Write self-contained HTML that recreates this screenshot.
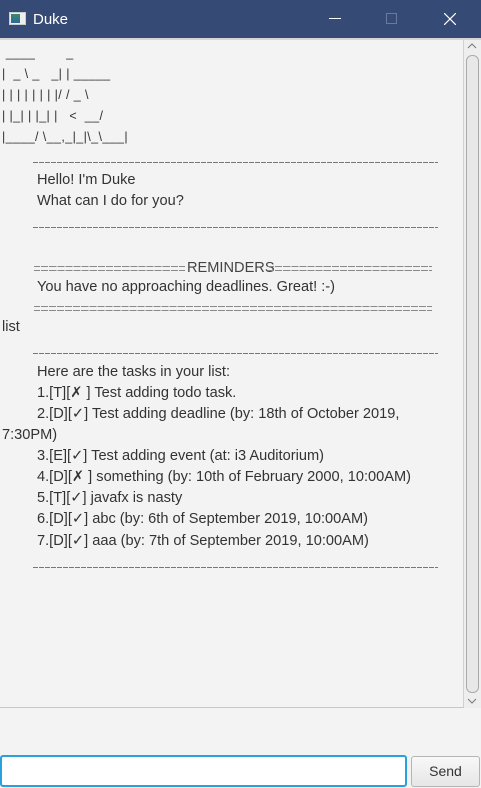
<!DOCTYPE html>
<html><head><meta charset="utf-8"><style>
*{margin:0;padding:0;box-sizing:border-box}
body{width:481px;height:788px;background:#f3f3f3;position:relative;overflow:hidden;font-family:"Liberation Sans","DejaVu Sans",sans-serif;color:#333;font-size:14.6px}
.tb{position:absolute;left:0;top:0;width:481px;height:38px;background:#354a75;color:#fff}
.t{position:absolute;white-space:pre;line-height:18px}
.dash{position:absolute;left:33px;width:405px;height:1px;background:repeating-linear-gradient(90deg,#777 0 5px,transparent 5px 6px)}
.eq{position:absolute;height:5px;border-top:1px solid #888;border-bottom:1px solid #888;border-image:repeating-linear-gradient(90deg,#888 0 7px,transparent 7px 8px) 1}
</style></head><body>
<div class="tb">
 <div style="position:absolute;left:9px;top:12px;width:17px;height:13px;background:#eee;border:1px solid #ccc"><div style="position:absolute;left:1px;top:1px;width:9px;height:9px;background:linear-gradient(#3a8a6a,#2d6a9a)"></div></div>
 <div class="t" style="left:33px;top:11px;font-size:15px;color:#fff">Duke</div>
 <div style="position:absolute;left:329px;top:18px;width:12px;height:1px;background:#fff"></div>
 <div style="position:absolute;left:386px;top:13px;width:11px;height:11px;border:1px solid #6a7a9a"></div>
 <svg style="position:absolute;left:444px;top:13px" width="12" height="12"><path d="M0 0L12 12M12 0L0 12" stroke="#fff" stroke-width="1.2"/></svg>
</div>
<div style="position:absolute;left:0;top:38px;width:481px;height:2px;background:#d6d6d6"></div>
<div style="position:absolute;left:463px;top:40px;width:18px;height:668px;background:#eeeeee;border-left:1px solid #d0d0d0"></div>
<svg style="position:absolute;left:467px;top:42px" width="10" height="8"><path d="M1 6L5 2L9 6" stroke="#777" fill="none"/></svg>
<div style="position:absolute;left:466px;top:55px;width:13px;height:638px;background:#e8e8e8;border:1px solid #aaa;border-radius:6px"></div>
<svg style="position:absolute;left:467px;top:697px" width="10" height="8"><path d="M1 2L5 6L9 2" stroke="#777" fill="none"/></svg>
<div style="position:absolute;left:0;top:707px;width:464px;height:1px;background:#c8c8c8"></div>

<div class="t" style="left:2px;top:43px;font-size:12.5px;line-height:21px;letter-spacing:0.4px"> ____        _
|  _ \ _   _| | _____
| | | | | | | |/ / _ \
| |_| | |_| |   <  __/
|____/ \__,_|_|\_\___|</div>

<div class="dash" style="top:162px"></div>
<div class="t" style="left:37px;top:171px">Hello! I'm Duke</div>
<div class="t" style="left:37px;top:192px">What can I do for you?</div>
<div class="dash" style="top:227px"></div>
<div class="eq" style="left:34px;top:266px;width:151px"></div>
<div class="t" style="left:187px;top:259px;color:#444">REMINDERS</div>
<div class="eq" style="left:268px;top:266px;width:164px"></div>
<div class="t" style="left:37px;top:278px">You have no approaching deadlines. Great! :-)</div>
<div class="eq" style="left:34px;top:306px;width:398px"></div>
<div class="t" style="left:2px;top:318px">list</div>
<div class="dash" style="top:353px"></div>
<div class="t" style="left:37px;top:363px">Here are the tasks in your list:</div>
<div class="t" style="left:37px;top:384px">1.[T][✗ ] Test adding todo task.</div>
<div class="t" style="left:37px;top:405px">2.[D][✓] Test adding deadline (by: 18th of October 2019,</div>
<div class="t" style="left:2px;top:426px">7:30PM)</div>
<div class="t" style="left:37px;top:447px">3.[E][✓] Test adding event (at: i3 Auditorium)</div>
<div class="t" style="left:37px;top:468px">4.[D][✗ ] something (by: 10th of February 2000, 10:00AM)</div>
<div class="t" style="left:37px;top:489px">5.[T][✓] javafx is nasty</div>
<div class="t" style="left:37px;top:510px">6.[D][✓] abc (by: 6th of September 2019, 10:00AM)</div>
<div class="t" style="left:37px;top:532px">7.[D][✓] aaa (by: 7th of September 2019, 10:00AM)</div>
<div class="dash" style="top:567px"></div>

<div style="position:absolute;left:0;top:755px;width:407px;height:32px;background:#fff;border:2px solid #2aa0de;border-radius:3px"></div>
<div style="position:absolute;left:411px;top:756px;width:69px;height:31px;background:linear-gradient(#f8f8f8,#e6e6e6);border:1px solid #b5b5b5;border-radius:3px;text-align:center;line-height:29px;font-size:14px;color:#333">Send</div>
</body></html>
